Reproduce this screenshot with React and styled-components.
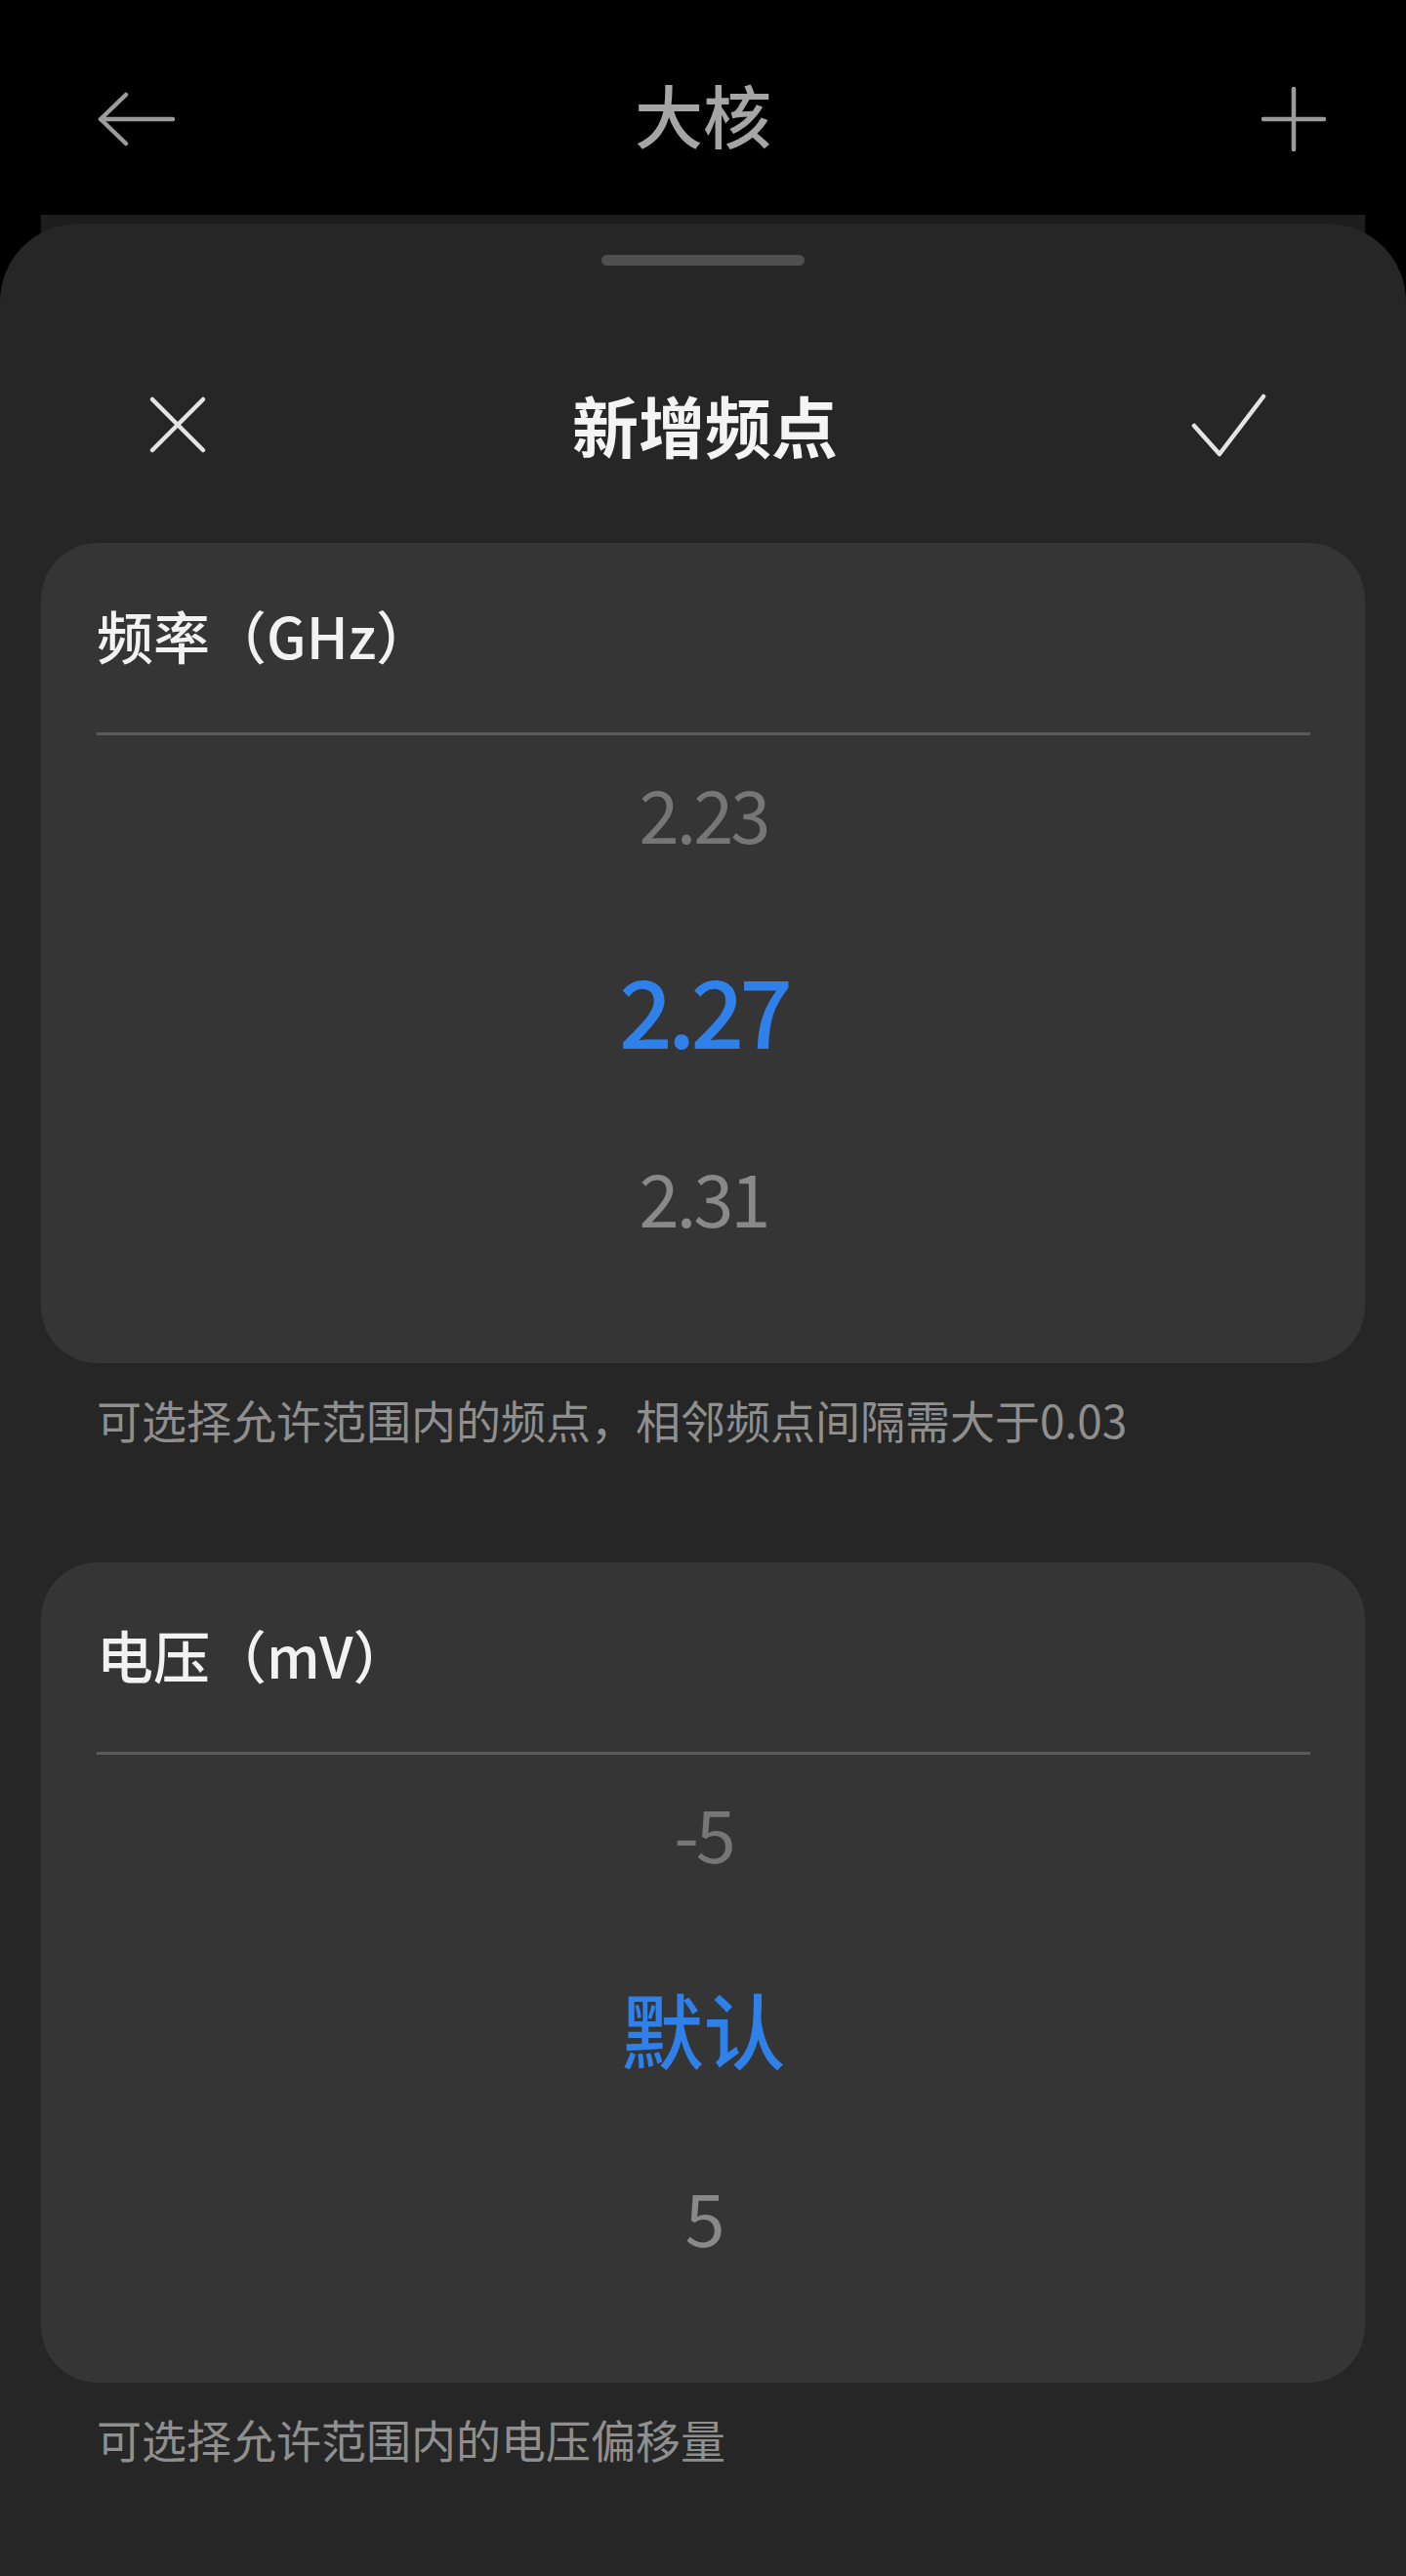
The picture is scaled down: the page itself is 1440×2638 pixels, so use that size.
import React from "react";
import styled, { createGlobalStyle } from "styled-components";

const GlobalStyle = createGlobalStyle`
  body {
    margin: 0;
    background: #000;
    font-family: "Noto Sans CJK SC", "Noto Sans", sans-serif;
  }
  * {
    box-sizing: border-box;
  }
`;

const Page = styled.div`
  min-height: 100vh;
  display: flex;
  flex-direction: column;
  background: #000;
`;

const TopBar = styled.div`
  height: 220px;
  padding: 86px 82px 0 82px;
  display: grid;
  grid-template-columns: 1fr auto 1fr;
  align-items: start;
`;

const TopTitle = styled.div`
  height: 72px;
  line-height: 62px;
  font-size: 70px;
  font-weight: 500;
  color: #a5a5a5;
`;

const IconSlot = styled.div`
  height: 72px;
  padding-left: ${(p) => p.inset || 0}px;
  display: flex;
  align-items: center;
  justify-content: ${(p) => (p.end ? "flex-end" : "flex-start")};
`;

// the page card that peeks out behind the sheet
const Underlay = styled.div`
  margin: 0 42px;
  height: 80px;
  background: #1d1d1d;
`;

const Sheet = styled.div`
  position: relative;
  margin-top: -71px;
  flex: 1;
  background: #262626;
  border-radius: 80px 80px 0 0;
  padding: 32px 42px 60px;
  display: flex;
  flex-direction: column;
`;

const Handle = styled.div`
  align-self: center;
  width: 208px;
  height: 11px;
  border-radius: 6px;
  background: #4f4f4f;
`;

const SheetHeader = styled.div`
  margin-top: 100px;
  height: 126px;
  padding: 0 100px 0 104px;
  display: grid;
  grid-template-columns: 1fr auto 1fr;
  align-items: center;
`;

const SheetTitle = styled.div`
  font-size: 68px;
  line-height: 74px;
  font-weight: 700;
  color: #f4f4f4;
`;

const Card = styled.div`
  margin-top: ${(p) => p.top}px;
  background: #353535;
  border-radius: 58px;
  padding: 0 56px 0 57px;
`;

const CardTitle = styled.div`
  padding: 54px 0 60px;
  line-height: 80px;
  font-size: 58px;
  font-weight: 500;
  color: #f2f2f2;
  border-bottom: 3px solid #5b5b5b;
`;

const Wheel = styled.div`
  padding: 34px 0 126px;
  display: flex;
  flex-direction: column;
  align-items: center;
  gap: 95px;
`;

const WheelItem = styled.div`
  height: ${(p) => (p.active ? 113 : 90)}px;
  padding-top: ${(p) => (p.active ? 12 : 0)}px;
  line-height: ${(p) => (p.active ? 98 : 90)}px;
  font-size: ${(p) => (p.active ? p.big || 96 : 74)}px;
  font-weight: ${(p) => (p.active ? 500 : 400)};
  color: ${(p) => (p.active ? "#2f80e8" : p.dim ? "#767676" : "#898989")};
  letter-spacing: ${(p) => (p.active ? (p.big ? "0" : "-5px") : "-3px")};
`;

const Hint = styled.div`
  margin-top: 27px;
  padding-left: 57px;
  font-size: 46px;
  line-height: 60px;
  color: #8f8f8f;
`;

const BackIcon = () => (
  <svg width="80" height="56" viewBox="0 0 80 56" fill="none">
    <path
      d="M77 28H3M29 3L3 28L29 53"
      stroke="#9c9c9c"
      strokeWidth="4.5"
      strokeLinecap="round"
      strokeLinejoin="round"
    />
  </svg>
);

const PlusIcon = () => (
  <svg width="66" height="66" viewBox="0 0 66 66" fill="none">
    <path d="M33 2V64M2 33H64" stroke="#9c9c9c" strokeWidth="4.5" strokeLinecap="round" />
  </svg>
);

const CloseIcon = () => (
  <svg width="72" height="72" viewBox="0 0 72 72" fill="none">
    <path
      d="M10 10L62 62M62 10L10 62"
      stroke="#e4e4e4"
      strokeWidth="4.5"
      strokeLinecap="round"
    />
  </svg>
);

const CheckIcon = () => (
  <svg width="80" height="72" viewBox="0 0 80 72" fill="none">
    <path
      d="M5 37L31 66L76 7"
      stroke="#e4e4e4"
      strokeWidth="4.5"
      strokeLinecap="round"
      strokeLinejoin="round"
    />
  </svg>
);

const pickers = [
  {
    title: "频率（GHz）",
    items: ["2.23", "2.27", "2.31"],
    hint: "可选择允许范围内的频点，相邻频点间隔需大于0.03",
    top: 58,
  },
  {
    title: "电压（mV）",
    items: ["-5", "默认", "5"],
    big: 84,
    hint: "可选择允许范围内的电压偏移量",
    top: 117,
  },
];

export default function App() {
  return (
    <>
      <GlobalStyle />
      <Page>
        <TopBar>
          <IconSlot inset={18}>
            <BackIcon />
          </IconSlot>
          <TopTitle>大核</TopTitle>
          <IconSlot end>
            <PlusIcon />
          </IconSlot>
        </TopBar>
        <Underlay />
        <Sheet>
          <Handle />
          <SheetHeader>
            <IconSlot>
              <CloseIcon />
            </IconSlot>
            <SheetTitle>新增频点</SheetTitle>
            <IconSlot end>
              <CheckIcon />
            </IconSlot>
          </SheetHeader>
          {pickers.map((p) => (
            <React.Fragment key={p.title}>
              <Card top={p.top}>
                <CardTitle>{p.title}</CardTitle>
                <Wheel>
                  <WheelItem dim>{p.items[0]}</WheelItem>
                  <WheelItem active big={p.big}>
                    {p.items[1]}
                  </WheelItem>
                  <WheelItem>{p.items[2]}</WheelItem>
                </Wheel>
              </Card>
              <Hint>{p.hint}</Hint>
            </React.Fragment>
          ))}
        </Sheet>
      </Page>
    </>
  );
}
